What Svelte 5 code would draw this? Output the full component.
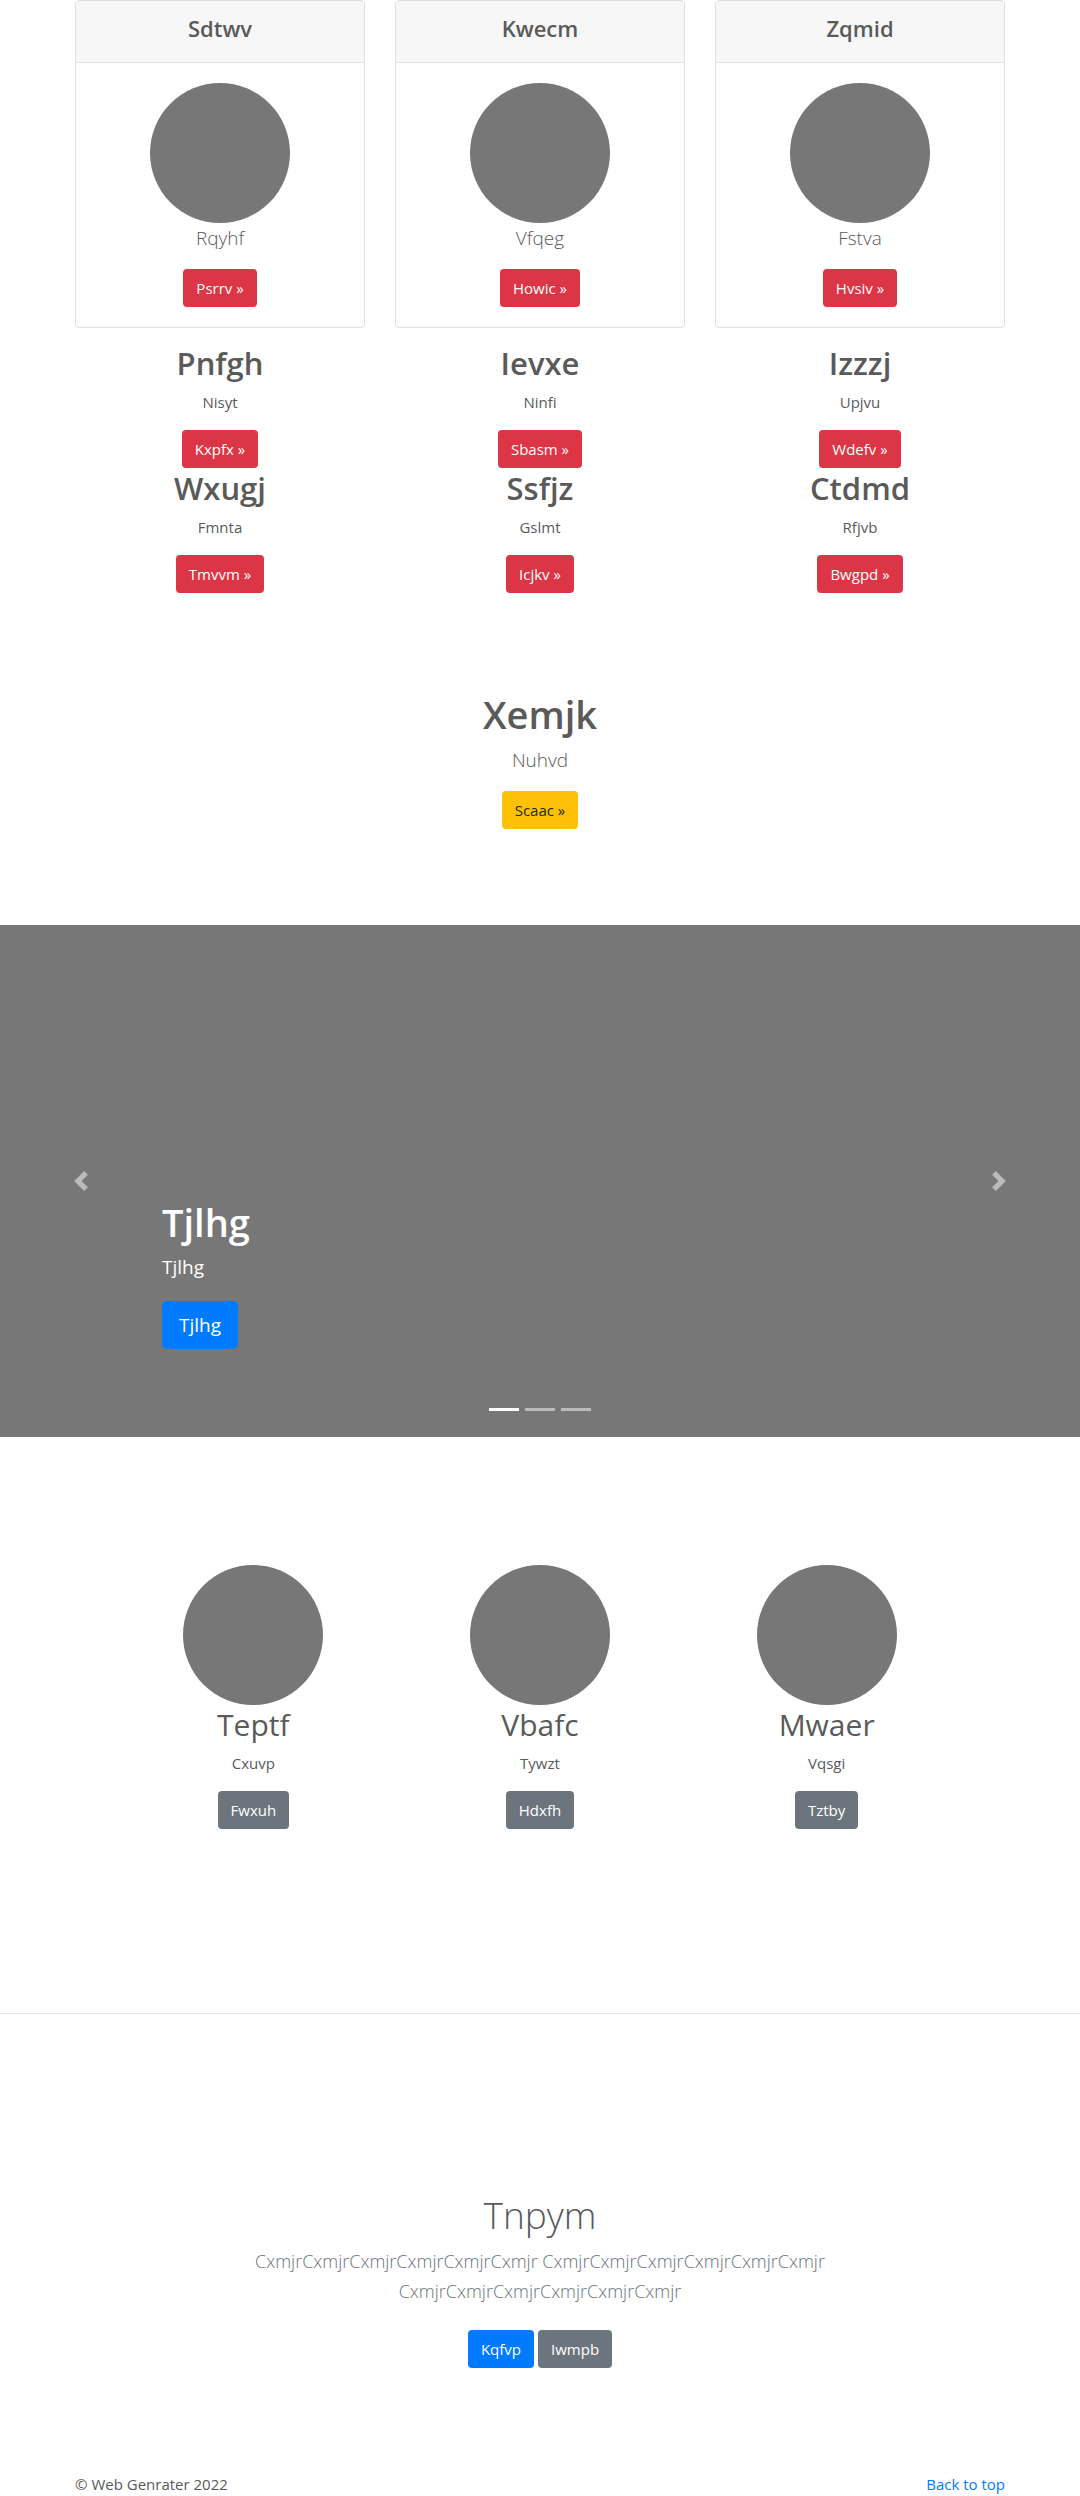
<script>
  const cards = [
    { title: 'Sdtwv', text: 'Rqyhf', action: 'Psrrv »' },
    { title: 'Kwecm', text: 'Vfqeg', action: 'Howic »' },
    { title: 'Zqmid', text: 'Fstva', action: 'Hvsiv »' },
  ];
  const topics = [
    { title: 'Pnfgh', text: 'Nisyt', action: 'Kxpfx »' },
    { title: 'Ievxe', text: 'Ninfi', action: 'Sbasm »' },
    { title: 'Izzzj', text: 'Upjvu', action: 'Wdefv »' },
    { title: 'Wxugj', text: 'Fmnta', action: 'Tmvvm »' },
    { title: 'Ssfjz', text: 'Gslmt', action: 'Icjkv »' },
    { title: 'Ctdmd', text: 'Rfjvb', action: 'Bwgpd »' },
  ];
  const features = [
    { title: 'Teptf', text: 'Cxuvp', action: 'Fwxuh' },
    { title: 'Vbafc', text: 'Tywzt', action: 'Hdxfh' },
    { title: 'Mwaer', text: 'Vqsgi', action: 'Tztby' },
  ];
  const word = 'Cxmjr'.repeat(6);
  let slide = $state(0);
  const move = (step) => (slide = (slide + step + 3) % 3);
</script>

<main id="top">
  <section class="container">
    <div class="grid">
      {#each cards as card}
        <article class="card">
          <header><h4>{card.title}</h4></header>
          <div class="card-body">
            <div class="circle"></div>
            <p class="lead">{card.text}</p>
            <a class="btn danger" href="#top">{card.action}</a>
          </div>
        </article>
      {/each}
    </div>
    <div class="grid topics">
      {#each topics as topic}
        <article>
          <h2>{topic.title}</h2>
          <p>{topic.text}</p>
          <a class="btn danger" href="#top">{topic.action}</a>
        </article>
      {/each}
    </div>
  </section>

  <section class="banner">
    <h1>Xemjk</h1>
    <p class="lead">Nuhvd</p>
    <a class="btn warning" href="#top">Scaac »</a>
  </section>

  <section class="carousel" aria-label="Slides">
    <div class="slide">
      <button class="arrow" aria-label="Previous" onclick={() => move(-1)}>
        <svg viewBox="0 0 8 8" width="20" height="20" fill="#fff"><path d="M5.25 0l-4 4 4 4 1.5-1.5L4.25 4l2.5-2.5L5.25 0z" /></svg>
      </button>
      <div class="caption">
        <h1>Tjlhg</h1>
        <p>Tjlhg</p>
        <a class="btn large primary" href="#top">Tjlhg</a>
      </div>
      <button class="arrow" aria-label="Next" onclick={() => move(1)}>
        <svg viewBox="0 0 8 8" width="20" height="20" fill="#fff"><path d="M2.75 0l-1.5 1.5L3.75 4l-2.5 2.5L2.75 8l4-4-4-4z" /></svg>
      </button>
    </div>
    <div class="indicators">
      {#each [0, 1, 2] as n}
        <button class:active={slide === n} aria-label="Slide {n + 1}" onclick={() => (slide = n)}></button>
      {/each}
    </div>
  </section>

  <section class="features grid">
    {#each features as feature}
      <article>
        <div class="circle"></div>
        <h2>{feature.title}</h2>
        <p>{feature.text}</p>
        <a class="btn secondary" href="#top">{feature.action}</a>
      </article>
    {/each}
  </section>

  <hr />

  <section class="closing">
    <h1>Tnpym</h1>
    <p class="lead">{word} {word} {word}</p>
    <div class="actions">
      <a class="btn primary" href="#top">Kqfvp</a>
      <a class="btn secondary" href="#top">Iwmpb</a>
    </div>
  </section>
</main>

<footer class="container">
  <span>© Web Genrater 2022</span>
  <a href="#top">Back to top</a>
</footer>

<style>
  :global(body) {
    background: #fff;
    color: #5a5a5a;
    font: 15px/24px 'Segoe UI', 'Open Sans', 'Noto Sans', sans-serif;
  }
  main, footer, main :global(*) { box-sizing: border-box; }
  h1, h2, h4, p { margin: 0; }
  h1 { font-size: 38px; line-height: 50px; font-weight: 600; margin-bottom: 6px; }
  h2 { font-size: 31px; line-height: 39px; font-weight: 600; margin-bottom: 7px; }
  h4 { font-size: 22px; line-height: 31px; font-weight: 600; margin-bottom: 6px; }
  p { margin-bottom: 16px; }
  .lead { font-size: 19px; line-height: 30px; font-weight: 300; }

  .container { max-width: 960px; margin: 0 auto; padding: 0 15px; }
  .grid { display: grid; grid-template-columns: repeat(3, 1fr); column-gap: 30px; text-align: center; }
  .card { border: 1px solid #dfdfdf; border-radius: 4px; overflow: hidden; }
  .card header { background: #f7f7f7; border-bottom: 1px solid #dfdfdf; padding: 12px 20px; }
  .card-body { padding: 20px; }
  .circle { width: 140px; height: 140px; border-radius: 50%; background: #777; margin: 0 auto; }
  .topics { margin-top: 16px; row-gap: 1px; }

  .btn {
    display: inline-block;
    vertical-align: top;
    padding: 6px 12px;
    border: 1px solid transparent;
    border-radius: 4px;
    color: #fff;
    text-decoration: none;
  }
  .large { font-size: 19px; line-height: 30px; padding: 8px 16px; border-radius: 5px; }
  .danger { background: #dc3545; }
  .warning { background: #ffc107; color: #212529; }
  .primary { background: #007bff; }
  .secondary { background: #6c757d; }

  .banner { padding: 96px 15px; text-align: center; }

  .carousel { background: #777; color: #fff; height: 512px; display: flex; flex-direction: column; position: relative; }
  .slide { flex: 1; display: flex; }
  .arrow {
    width: 15%;
    border: 0;
    padding: 0;
    background: none;
    opacity: 0.5;
    display: flex;
    align-items: center;
    justify-content: center;
    cursor: pointer;
  }
  .caption { flex: 1; align-self: flex-end; padding-bottom: 88px; }
  .caption p { font-size: 19px; line-height: 28px; margin-bottom: 20px; }
  .indicators { position: absolute; left: 0; right: 0; bottom: 16px; display: flex; justify-content: center; gap: 6px; }
  .indicators button {
    width: 30px;
    height: 23px;
    padding: 0;
    border: 0 solid transparent;
    border-width: 10px 0;
    background: #fff;
    background-clip: padding-box;
    opacity: 0.5;
    cursor: pointer;
  }
  .indicators .active { opacity: 1; }

  .features { max-width: 860px; margin: 128px auto 0; column-gap: 0; }
  .features h2 { font-size: 30px; font-weight: 400; }
  hr { border: 0; border-top: 1px solid #e6e6e6; margin: 184px 0 0; }

  .closing { max-width: 640px; margin: 0 auto; padding: 176px 15px 104px; text-align: center; }
  .closing h1 { font-size: 37px; font-weight: 300; }
  .closing .lead { font-size: 18px; color: #6c757d; margin-bottom: 24px; }
  .actions { display: flex; justify-content: center; gap: 4px; }

  footer { display: flex; justify-content: space-between; }
  footer a { color: #007bff; text-decoration: none; }
</style>
